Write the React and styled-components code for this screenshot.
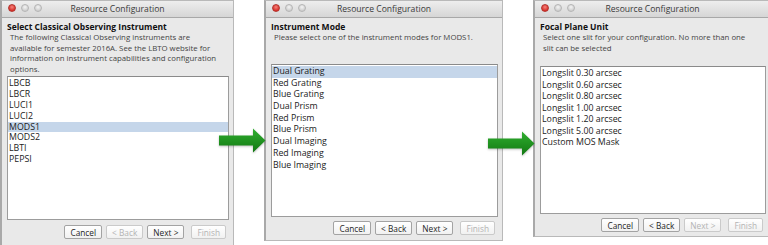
import styled, { createGlobalStyle } from "styled-components";

const GlobalStyle = createGlobalStyle`
  html, body {
    margin: 0;
    padding: 0;
    background: #ffffff;
  }
  body {
    width: 768px;
    height: 245px;
    overflow: hidden;
    font-family: "Open Sans", "DejaVu Sans", sans-serif;
    color: #1c1c1c;
  }
`;

const Stage = styled.div`
  position: relative;
  display: flex;
  align-items: flex-start;
  gap: 30px;
  width: 768px;
  height: 245px;
  overflow: hidden;
`;

const Window = styled.div`
  flex: none;
  width: ${(p) => p.$w}px;
  height: ${(p) => p.$h}px;
  box-sizing: border-box;
  display: flex;
  flex-direction: column;
  background: #e9e9e9;
  border: 1px solid #b9b9b9;
  border-left: 2px solid #a9a9a9;
`;

const TitleBar = styled.div`
  position: relative;
  flex: none;
  height: 17px;
  box-sizing: border-box;
  display: flex;
  align-items: center;
  justify-content: center;
  background: linear-gradient(#eeeeee, #d6d6d6);
  border-bottom: 1px solid #a8a8a8;
  font-size: 8.6px;
  color: #3a3a3a;
`;

const Lights = styled.div`
  position: absolute;
  left: 6px;
  top: 3px;
  display: flex;
  gap: 5px;
`;

const Light = styled.span`
  width: 8px;
  height: 8px;
  box-sizing: border-box;
  border-radius: 50%;
  background: ${(p) =>
    p.$red
      ? "radial-gradient(circle at 50% 35%, #f5847c, #d8302a 70%)"
      : "radial-gradient(circle at 50% 35%, #f4f4f4, #cfcfcf 70%)"};
  border: 1px solid ${(p) => (p.$red ? "#b2352f" : "#b5b5b5")};
`;

const Body = styled.div`
  flex: 1;
  display: flex;
  flex-direction: column;
  padding: 4px 4px 0 5px;
`;

const Heading = styled.div`
  font-weight: 700;
  font-size: 8.5px;
  line-height: 10px;
  color: #111;
`;

const Description = styled.div`
  font-size: 7.8px;
  line-height: 10.5px;
  color: #444;
  padding-left: 3px;
  min-height: ${(p) => p.$min || 0}px;
`;

const List = styled.div`
  flex: none;
  height: ${(p) => p.$h}px;
  margin-top: ${(p) => p.$top}px;
  background: #ffffff;
  border: 1px solid #9c9c9c;
  border-top-color: #8a8a8a;
  box-sizing: border-box;
  padding-top: 1px;
`;

const Row = styled.div`
  height: ${(p) => p.$row}px;
  line-height: ${(p) => p.$row}px;
  padding-left: 1px;
  font-size: 8.8px;
  color: #1a1a1a;
  background: ${(p) => (p.$selected ? "#c5d6ea" : "transparent")};
  white-space: nowrap;
`;

const Buttons = styled.div`
  display: flex;
  justify-content: flex-end;
  gap: 4px;
  margin-top: ${(p) => p.$top}px;
  padding-right: 3px;
`;

const Button = styled.div`
  height: 14px;
  box-sizing: border-box;
  padding: 0 5px;
  display: flex;
  align-items: center;
  border: 1px solid ${(p) => (p.$disabled ? "#cacaca" : "#a3a3a3")};
  border-radius: 2px;
  background: linear-gradient(#ffffff, #f1f1f1);
  font-size: 8.3px;
  color: ${(p) => (p.$disabled ? "#b3b3b3" : "#1f1f1f")};
  margin-left: ${(p) => p.$gapLeft || 0}px;
`;

const Arrow = styled.svg`
  position: absolute;
  left: ${(p) => p.$x}px;
  top: ${(p) => p.$y}px;
  filter: drop-shadow(0 1px 1px rgba(0, 0, 0, 0.25));
`;

const windows = [
  {
    w: 234,
    h: 252,
    heading: "Select Classical Observing Instrument",
    desc: [
      "The following Classical Observing instruments are",
      "available for semester 2016A. See the LBTO website for",
      "information on instrument capabilities and configuration",
      "options.",
    ],
    descMin: 0,
    listTop: 2,
    listH: 144,
    row: 10.9,
    items: ["LBCB", "LBCR", "LUCI1", "LUCI2", "MODS1", "MODS2", "LBTI", "PEPSI"],
    selected: 4,
    btnTop: 5,
    back: false,
    next: true,
  },
  {
    w: 239,
    h: 241,
    heading: "Instrument Mode",
    desc: ["Please select one of the instrument modes for MODS1."],
    descMin: 32,
    listTop: 0,
    listH: 153,
    row: 11.7,
    items: [
      "Dual Grating",
      "Red Grating",
      "Blue Grating",
      "Dual Prism",
      "Red Prism",
      "Blue Prism",
      "Dual Imaging",
      "Red Imaging",
      "Blue Imaging",
    ],
    selected: 0,
    btnTop: 4,
    back: true,
    next: true,
  },
  {
    w: 238,
    h: 237,
    heading: "Focal Plane Unit",
    desc: [
      "Select one slit for your configuration. No more than one",
      "slit can be selected",
    ],
    descMin: 34,
    listTop: 0,
    listH: 148,
    row: 11.5,
    items: [
      "Longslit 0.30 arcsec",
      "Longslit 0.60 arcsec",
      "Longslit 0.80 arcsec",
      "Longslit 1.00 arcsec",
      "Longslit 1.20 arcsec",
      "Longslit 5.00 arcsec",
      "Custom MOS Mask",
    ],
    selected: -1,
    btnTop: 4,
    back: true,
    next: false,
  },
];

function GreenArrow({ x, y }) {
  return (
    <Arrow $x={x} $y={y} width="47" height="25" viewBox="0 0 47 25">
      <defs>
        <linearGradient id={`g${x}`} x1="0" y1="0" x2="0" y2="1">
          <stop offset="0" stopColor="#2fae2f" />
          <stop offset="1" stopColor="#127812" />
        </linearGradient>
      </defs>
      <polygon
        points="0,7.5 34,7.5 34,0.5 46.5,12.5 34,24.5 34,17.5 0,17.5"
        fill={`url(#g${x})`}
      />
    </Arrow>
  );
}

function Wizard({ data }) {
  return (
    <Window $w={data.w} $h={data.h}>
      <TitleBar>
        <Lights>
          <Light $red />
          <Light />
          <Light />
        </Lights>
        Resource Configuration
      </TitleBar>
      <Body>
        <Heading>{data.heading}</Heading>
        <Description $min={data.descMin}>
          {data.desc.map((line) => (
            <div key={line}>{line}</div>
          ))}
        </Description>
        <List $h={data.listH} $top={data.listTop}>
          {data.items.map((item, i) => (
            <Row key={item} $row={data.row} $selected={i === data.selected}>
              {item}
            </Row>
          ))}
        </List>
        <Buttons $top={data.btnTop}>
          <Button>Cancel</Button>
          <Button $disabled={!data.back}>&lt; Back</Button>
          <Button $disabled={!data.next}>Next &gt;</Button>
          <Button $disabled $gapLeft={3}>
            Finish
          </Button>
        </Buttons>
      </Body>
    </Window>
  );
}

export default function App() {
  return (
    <Stage>
      <GlobalStyle />
      {windows.map((w) => (
        <Wizard key={w.heading} data={w} />
      ))}
      <GreenArrow x={219} y={128} />
      <GreenArrow x={488} y={131} />
    </Stage>
  );
}
